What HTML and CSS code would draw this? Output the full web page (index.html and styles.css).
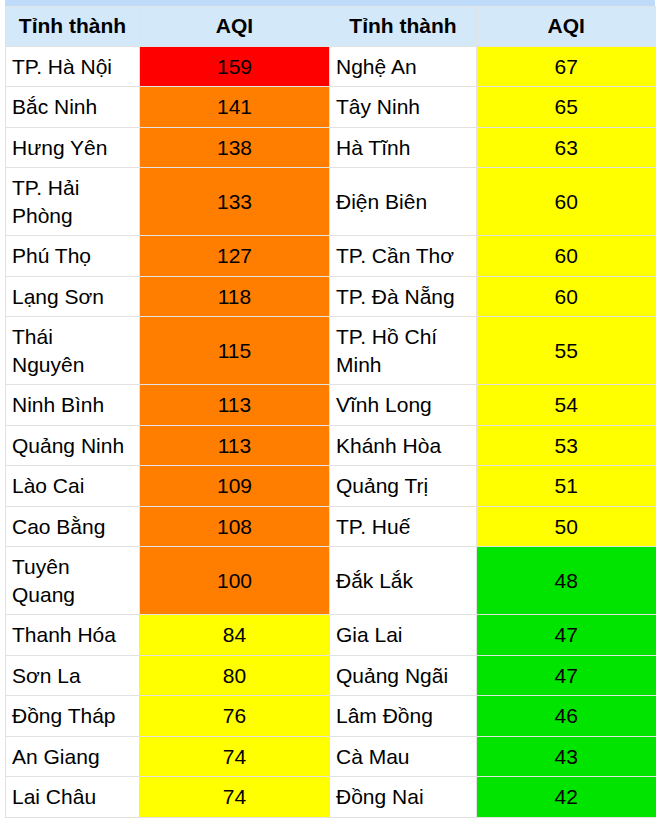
FILE: index.html
```html
<!DOCTYPE html>
<html lang="vi">
<head>
<meta charset="utf-8">
<link rel="stylesheet" href="styles.css">
</head>
<body>
<div class="wrap">
<div class="strip"></div>
<table class="aqi">
<colgroup><col class="c1"><col class="c2"><col class="c3"><col class="c4"></colgroup>
<thead>
<tr><th>Tỉnh thành</th><th>AQI</th><th>Tỉnh thành</th><th>AQI</th></tr>
</thead>
<tbody>
<tr><td>TP. Hà Nội</td><td class="v red">159</td><td>Nghệ An</td><td class="v yel">67</td></tr>
<tr><td>Bắc Ninh</td><td class="v ora">141</td><td>Tây Ninh</td><td class="v yel">65</td></tr>
<tr><td>Hưng Yên</td><td class="v ora">138</td><td>Hà Tĩnh</td><td class="v yel">63</td></tr>
<tr><td>TP. Hải<br>Phòng</td><td class="v ora">133</td><td>Điện Biên</td><td class="v yel">60</td></tr>
<tr><td>Phú Thọ</td><td class="v ora">127</td><td>TP. Cần Thơ</td><td class="v yel">60</td></tr>
<tr><td>Lạng Sơn</td><td class="v ora">118</td><td>TP. Đà Nẵng</td><td class="v yel">60</td></tr>
<tr><td>Thái<br>Nguyên</td><td class="v ora">115</td><td>TP. Hồ Chí<br>Minh</td><td class="v yel">55</td></tr>
<tr><td>Ninh Bình</td><td class="v ora">113</td><td>Vĩnh Long</td><td class="v yel">54</td></tr>
<tr><td>Quảng Ninh</td><td class="v ora">113</td><td>Khánh Hòa</td><td class="v yel">53</td></tr>
<tr><td>Lào Cai</td><td class="v ora">109</td><td>Quảng Trị</td><td class="v yel">51</td></tr>
<tr><td>Cao Bằng</td><td class="v ora">108</td><td>TP. Huế</td><td class="v yel">50</td></tr>
<tr><td>Tuyên<br>Quang</td><td class="v ora">100</td><td>Đắk Lắk</td><td class="v grn">48</td></tr>
<tr><td>Thanh Hóa</td><td class="v yel">84</td><td>Gia Lai</td><td class="v grn">47</td></tr>
<tr><td>Sơn La</td><td class="v yel">80</td><td>Quảng Ngãi</td><td class="v grn">47</td></tr>
<tr><td>Đồng Tháp</td><td class="v yel">76</td><td>Lâm Đồng</td><td class="v grn">46</td></tr>
<tr><td>An Giang</td><td class="v yel">74</td><td>Cà Mau</td><td class="v grn">43</td></tr>
<tr><td>Lai Châu</td><td class="v yel">74</td><td>Đồng Nai</td><td class="v grn">42</td></tr>
</tbody>
</table>
</div>
</body>
</html>
```
FILE: styles.css
```css
html, body {
  margin: 0;
  padding: 0;
  background: #ffffff;
}
.wrap {
  padding-left: 5px;
  width: 650px;
}
.strip {
  height: 6px;
  background: #bedbfa;
}
.aqi {
  width: 650px;
  border-collapse: collapse;
  table-layout: fixed;
  font-family: "Liberation Sans", Arial, sans-serif;
  font-size: 21px;
  color: #000;
}
.c1 { width: 134px; }
.c2 { width: 190px; }
.c3 { width: 147px; }
.c4 { width: 179px; }
.aqi th, .aqi td {
  border: 1px solid #e2e2e2;
  line-height: 27.5px;
  padding: 6px 6px;
  vertical-align: middle;
}
.aqi th {
  background: #d3e9fa;
  font-weight: bold;
  text-align: center;
  padding: 5px 6px 6px;
}
.aqi tr > :last-child {
  border-right: none;
}
.aqi td {
  text-align: left;
}
.aqi td.v {
  text-align: center;
}
.red { background: #ff0000; }
.ora { background: #ff7e00; }
.yel { background: #ffff00; }
.grn { background: #00e400; }
```
